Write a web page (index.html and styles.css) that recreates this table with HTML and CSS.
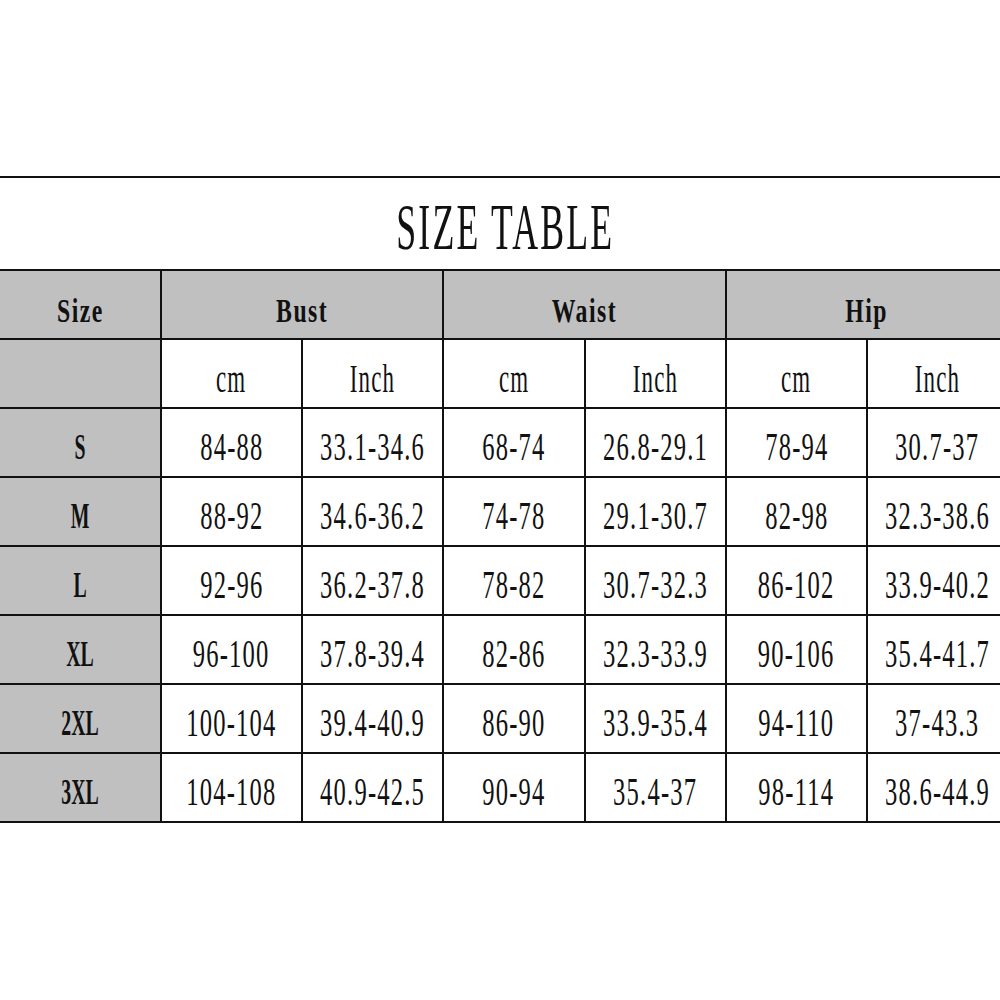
FILE: index.html
```html
<!DOCTYPE html>
<html>
<head>
<meta charset="utf-8">
<link rel="stylesheet" href="styles.css">
</head>
<body>
<div class="page">
  <div class="sheet">
    <div class="title"><span class="t">SIZE TABLE</span></div>
    <div class="grid">
      <div class="c g h"><span class="hb">Size</span></div>
      <div class="c g h span2"><span class="hb">Bust</span></div>
      <div class="c g h span2"><span class="hb">Waist</span></div>
      <div class="c g h span2"><span class="hb">Hip</span></div>

      <div class="c g"></div>
      <div class="c w s"><span class="u">cm</span></div>
      <div class="c w s"><span class="u">Inch</span></div>
      <div class="c w s"><span class="u">cm</span></div>
      <div class="c w s"><span class="u">Inch</span></div>
      <div class="c w s"><span class="u">cm</span></div>
      <div class="c w s"><span class="u">Inch</span></div>

      <div class="c g r"><span class="sb">S</span></div>
      <div class="c w r"><span class="d">84-88</span></div>
      <div class="c w r"><span class="d">33.1-34.6</span></div>
      <div class="c w r"><span class="d">68-74</span></div>
      <div class="c w r"><span class="d">26.8-29.1</span></div>
      <div class="c w r"><span class="d">78-94</span></div>
      <div class="c w r"><span class="d">30.7-37</span></div>

      <div class="c g r"><span class="sb">M</span></div>
      <div class="c w r"><span class="d">88-92</span></div>
      <div class="c w r"><span class="d">34.6-36.2</span></div>
      <div class="c w r"><span class="d">74-78</span></div>
      <div class="c w r"><span class="d">29.1-30.7</span></div>
      <div class="c w r"><span class="d">82-98</span></div>
      <div class="c w r"><span class="d">32.3-38.6</span></div>

      <div class="c g r"><span class="sb">L</span></div>
      <div class="c w r"><span class="d">92-96</span></div>
      <div class="c w r"><span class="d">36.2-37.8</span></div>
      <div class="c w r"><span class="d">78-82</span></div>
      <div class="c w r"><span class="d">30.7-32.3</span></div>
      <div class="c w r"><span class="d">86-102</span></div>
      <div class="c w r"><span class="d">33.9-40.2</span></div>

      <div class="c g r"><span class="sb">XL</span></div>
      <div class="c w r"><span class="d">96-100</span></div>
      <div class="c w r"><span class="d">37.8-39.4</span></div>
      <div class="c w r"><span class="d">82-86</span></div>
      <div class="c w r"><span class="d">32.3-33.9</span></div>
      <div class="c w r"><span class="d">90-106</span></div>
      <div class="c w r"><span class="d">35.4-41.7</span></div>

      <div class="c g r"><span class="sb">2XL</span></div>
      <div class="c w r"><span class="d">100-104</span></div>
      <div class="c w r"><span class="d">39.4-40.9</span></div>
      <div class="c w r"><span class="d">86-90</span></div>
      <div class="c w r"><span class="d">33.9-35.4</span></div>
      <div class="c w r"><span class="d">94-110</span></div>
      <div class="c w r"><span class="d">37-43.3</span></div>

      <div class="c g r"><span class="sb">3XL</span></div>
      <div class="c w r"><span class="d">104-108</span></div>
      <div class="c w r"><span class="d">40.9-42.5</span></div>
      <div class="c w r"><span class="d">90-94</span></div>
      <div class="c w r"><span class="d">35.4-37</span></div>
      <div class="c w r"><span class="d">98-114</span></div>
      <div class="c w r"><span class="d">38.6-44.9</span></div>
    </div>
  </div>
</div>
</body>
</html>
```
FILE: styles.css
```css
html, body {
  margin: 0;
  padding: 0;
  background: #ffffff;
}
.page {
  width: 1000px;
  height: 1000px;
  overflow: hidden;
  padding-top: 176px;
  box-sizing: border-box;
}
.sheet {
  width: 1010px;
  border-top: 2px solid #111;
}
.title {
  height: 91px;
  display: flex;
  justify-content: center;
  align-items: flex-start;
  font-family: "Liberation Serif", serif;
  color: #111;
  box-sizing: border-box;
}
.t {
  display: inline-block;
  font-size: 65px;
  line-height: 1;
  margin-top: 17px;
  transform: scaleX(0.55);
  letter-spacing: 4px;
  white-space: nowrap;
}
.grid {
  display: grid;
  grid-template-columns: 160px 139px 139px 140px 139px 139px 139px;
  grid-auto-rows: 67px;
  gap: 2px;
  background: #111;
  padding: 2px 0;
  font-family: "Liberation Serif", serif;
  color: #111;
}
.span2 {
  grid-column: span 2;
}
.c {
  display: flex;
  justify-content: center;
  align-items: center;
  white-space: nowrap;
}
.g {
  background: #c0c0c0;
}
.w {
  background: #ffffff;
}
.h {
  padding-top: 14px;
  box-sizing: border-box;
}
.s {
  padding-top: 10px;
  box-sizing: border-box;
}
.r {
  padding-top: 8px;
  box-sizing: border-box;
}
.hb {
  display: inline-block;
  font-size: 33px;
  font-weight: bold;
  line-height: 1;
  letter-spacing: 2px;
  transform: scaleX(0.72);
}
.sb {
  display: inline-block;
  font-size: 36px;
  font-weight: bold;
  line-height: 1;
  transform: scaleX(0.55);
}
.u {
  display: inline-block;
  font-size: 41px;
  line-height: 1;
  letter-spacing: 2px;
  transform: scaleX(0.56);
}
.d {
  display: inline-block;
  font-size: 41px;
  line-height: 1;
  letter-spacing: 2px;
  transform: scaleX(0.6);
}
```
